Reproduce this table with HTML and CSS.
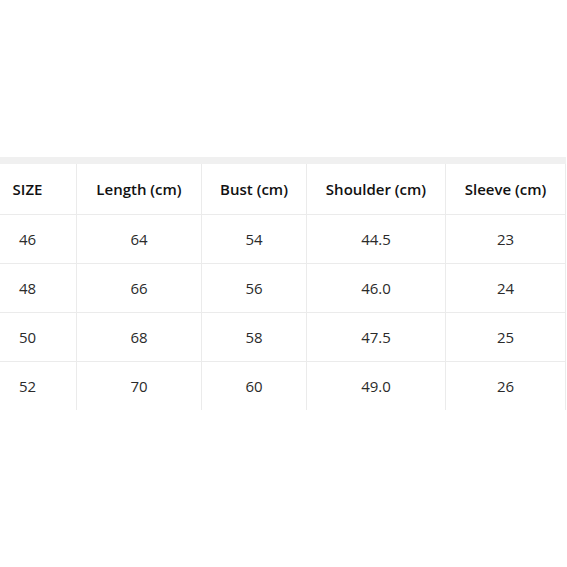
FILE: index.html
```html
<!DOCTYPE html>
<html>
<head>
<meta charset="utf-8">
<link rel="stylesheet" href="styles.css">
</head>
<body>
<div class="page">
  <div class="wrap">
    <div class="band"></div>
    <table class="size-table">
      <colgroup>
        <col class="c1"><col class="c2"><col class="c3"><col class="c4"><col class="c5">
      </colgroup>
      <thead>
        <tr><th>SIZE</th><th>Length (cm)</th><th>Bust (cm)</th><th>Shoulder (cm)</th><th>Sleeve (cm)</th></tr>
      </thead>
      <tbody>
        <tr><td>46</td><td>64</td><td>54</td><td>44.5</td><td>23</td></tr>
        <tr><td>48</td><td>66</td><td>56</td><td>46.0</td><td>24</td></tr>
        <tr><td>50</td><td>68</td><td>58</td><td>47.5</td><td>25</td></tr>
        <tr><td>52</td><td>70</td><td>60</td><td>49.0</td><td>26</td></tr>
      </tbody>
    </table>
  </div>
</div>
</body>
</html>
```

FILE: styles.css
```css
html, body {
  margin: 0;
  padding: 0;
  background: #ffffff;
}
.page {
  width: 567px;
  height: 567px;
  overflow: hidden;
  padding-top: 157px;
  box-sizing: border-box;
}
.wrap {
  width: 566px;
  overflow: hidden;
}
.band {
  height: 7px;
  background: #f0f0f0;
}
.size-table {
  margin-left: -22px;
  border-collapse: collapse;
  table-layout: fixed;
  width: 588px;
  font-family: "Open Sans", "Noto Sans", sans-serif;
  font-size: 15px;
  color: #2b2b2b;
}
.c1 { width: 98px; }
.c2 { width: 125px; }
.c3 { width: 105px; }
.c4 { width: 139px; }
.c5 { width: 120px; }
.size-table th,
.size-table td {
  text-align: center;
  padding: 0;
  border-left: 1px solid #ebebeb;
  border-right: 1px solid #ebebeb;
}
.size-table th {
  height: 50px;
  font-weight: 600;
  color: #111;
  border-bottom: 1px solid #ebebeb;
}
.size-table td {
  height: 48px;
  border-bottom: 1px solid #ebebeb;
}
.size-table tbody tr:last-child td {
  border-bottom: none;
}
```
